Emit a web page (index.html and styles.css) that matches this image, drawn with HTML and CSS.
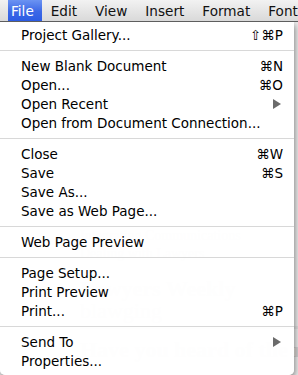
FILE: index.html
```html
<!DOCTYPE html>
<html>
<head>
<meta charset="utf-8">
<link rel="stylesheet" href="styles.css">
</head>
<body>
<div class="menubar">
  <span class="mb-item active">File</span>
  <span class="mb-item">Edit</span>
  <span class="mb-item">View</span>
  <span class="mb-item">Insert</span>
  <span class="mb-item">Format</span>
  <span class="mb-item">Font</span>
</div>
<div class="workspace">
  <div class="doc">
    <div class="doc-line l1">Integrating Communications</div>
    <div class="doc-line l2">Dealing with Lawyers</div>
    <div class="doc-title">Lawyers Weekly</div>
    <div class="doc-sub">blawging</div>
    <div class="doc-rule"></div>
    <div class="doc-body">Have you heard of the recent</div>
  </div>
  <div class="menu">
    <div class="row"><span>Project Gallery...</span><span class="key">⇧⌘P</span></div>
    <div class="sep"></div>
    <div class="row"><span>New Blank Document</span><span class="key">⌘N</span></div>
    <div class="row"><span>Open...</span><span class="key">⌘O</span></div>
    <div class="row"><span>Open Recent</span><span class="arrow"></span></div>
    <div class="row"><span>Open from Document Connection...</span></div>
    <div class="sep"></div>
    <div class="row"><span>Close</span><span class="key">⌘W</span></div>
    <div class="row"><span>Save</span><span class="key">⌘S</span></div>
    <div class="row"><span>Save As...</span></div>
    <div class="row"><span>Save as Web Page...</span></div>
    <div class="sep"></div>
    <div class="row"><span>Web Page Preview</span></div>
    <div class="sep"></div>
    <div class="row"><span>Page Setup...</span></div>
    <div class="row"><span>Print Preview</span></div>
    <div class="row"><span>Print...</span><span class="key">⌘P</span></div>
    <div class="sep"></div>
    <div class="row"><span>Send To</span><span class="arrow"></span></div>
    <div class="row"><span>Properties...</span></div>
  </div>
</div>
</body>
</html>
```
FILE: styles.css
```css
* { box-sizing: border-box; }
html, body { margin: 0; padding: 0; }
body {
  width: 298px;
  height: 375px;
  overflow: hidden;
  background: #ffffff;
  font-family: "DejaVu Sans", "Noto Sans", sans-serif;
  -webkit-font-smoothing: antialiased;
}
.menubar {
  height: 22px;
  display: flex;
  align-items: stretch;
  padding-left: 8px;
  background: linear-gradient(#f2f2f2, #d9d9d9);
  border-bottom: 1px solid #5e5e5e;
  white-space: nowrap;
  font-size: 13.6px;
  color: #111;
  overflow: hidden;
}
.mb-item {
  display: flex;
  align-items: center;
  padding: 0 9px 0 9px;
  flex-shrink: 0;
}
.mb-item.active {
  color: #fff;
  padding: 0 8px 0 3px;
  background: linear-gradient(#6b93f2, #3c68e6 55%, #2c5ce4);
}
.workspace {
  position: relative;
  height: 353px;
  background: #ececec;
  overflow: hidden;
}
.doc {
  height: 100%;
  padding-left: 80px;
  font-family: "Liberation Serif", serif;
  color: #d2d2d2;
}
.doc-line { font-size: 14px; height: 18px; }
.l1 { padding-top: 206px; height: 224px; }
.doc-title { font-size: 22px; font-weight: bold; margin-top: 14px; line-height: 22px; }
.doc-sub { font-size: 22px; line-height: 22px; }
.doc-rule { height: 3px; background: #dedede; margin-top: 4px; }
.doc-body { font-size: 22px; font-weight: bold; margin-top: 8px; white-space: nowrap; }
.menu {
  position: absolute;
  left: 0;
  top: 0;
  width: 294px;
  padding: 3px 0 5px;
  background: rgba(255, 255, 255, 0.96);
  border-radius: 0 0 5px 5px;
  box-shadow: 1px 3px 6px rgba(0, 0, 0, 0.45);
  font-size: 13.5px;
  color: #000;
}
.row {
  height: 19px;
  display: flex;
  align-items: center;
  justify-content: space-between;
  padding: 0 11px 0 21px;
  white-space: nowrap;
}
.arrow {
  width: 0;
  height: 0;
  margin-right: 2px;
  border-top: 5px solid transparent;
  border-bottom: 5px solid transparent;
  border-left: 8px solid #6b6b6b;
}
.sep {
  height: 12px;
  display: flex;
  align-items: center;
}
.sep::before {
  content: "";
  display: block;
  width: 100%;
  height: 1px;
  background: #d8d8d8;
}
```
